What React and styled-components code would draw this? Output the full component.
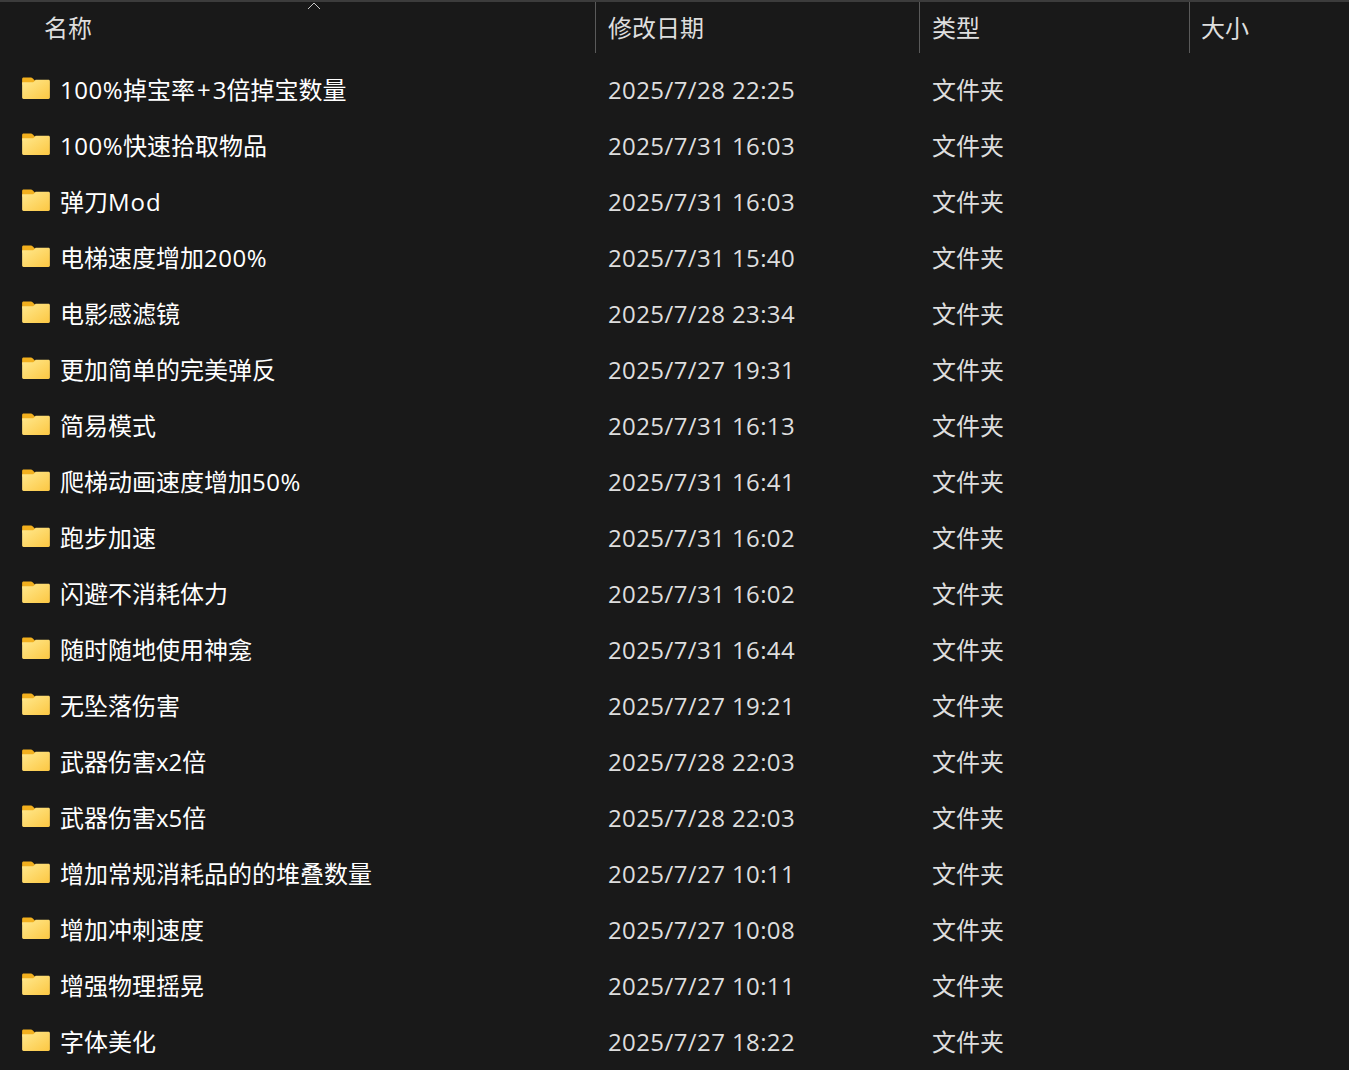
import styled, { createGlobalStyle } from 'styled-components'

const rows = [
    ['100%掉宝率+3倍掉宝数量', '2025/7/28 22:25'],
    ['100%快速拾取物品', '2025/7/31 16:03'],
    ['弹刀Mod', '2025/7/31 16:03'],
    ['电梯速度增加200%', '2025/7/31 15:40'],
    ['电影感滤镜', '2025/7/28 23:34'],
    ['更加简单的完美弹反', '2025/7/27 19:31'],
    ['简易模式', '2025/7/31 16:13'],
    ['爬梯动画速度增加50%', '2025/7/31 16:41'],
    ['跑步加速', '2025/7/31 16:02'],
    ['闪避不消耗体力', '2025/7/31 16:02'],
    ['随时随地使用神龛', '2025/7/31 16:44'],
    ['无坠落伤害', '2025/7/27 19:21'],
    ['武器伤害x2倍', '2025/7/28 22:03'],
    ['武器伤害x5倍', '2025/7/28 22:03'],
    ['增加常规消耗品的的堆叠数量', '2025/7/27 10:11'],
    ['增加冲刺速度', '2025/7/27 10:08'],
    ['增强物理摇晃', '2025/7/27 10:11'],
    ['字体美化', '2025/7/27 18:22'],
]

const GlobalStyle = createGlobalStyle`
    html, body {
        margin: 0;
        height: 100%;
        overflow: hidden;
        background: #191919;
    }
`

const Page = styled.div`
    height: 1070px;
    overflow: hidden;
    background: #191919;
    border-top: 2px solid #3c3c3c;
    box-sizing: border-box;
    font-family: 'Open Sans', 'Noto Sans CJK SC', sans-serif;
    font-size: 24px;
`
const Header = styled.div`
    position: relative;
    display: grid;
    grid-template-columns: 595px 324px 270px 160px;
    height: 51px;
    margin-bottom: 9px;
`
const HeaderCell = styled.div`
    display: flex;
    align-items: center;
    padding-left: ${(p) => p.$pad}px;
    padding-bottom: 3px;
    border-left: ${(p) => (p.$first ? 'none' : '1px solid #5a5a5a')};
    color: #dedede;
`
const SortArrow = styled.svg`
    position: absolute;
    left: 307px;
    top: 0;
    width: 14px;
    height: 8px;
`
const Row = styled.div`
    display: grid;
    grid-template-columns: 595px 324px 270px 160px;
    height: 56px;
    box-sizing: border-box;
    padding-bottom: 4px;
    align-items: center;
`
const NameCell = styled.div`
    display: flex;
    align-items: center;
    padding-left: 22px;
    color: #ffffff;
    white-space: nowrap;
`
const NameText = styled.span`
    margin-left: 10px;
`
const Latin = styled.span`
    letter-spacing: ${(p) => p.$spacing}px;
`
const Plus = styled.span`
    padding: 0 2px;
`
const Cell = styled.div`
    padding-left: 13px;
    color: #dedede;
    white-space: nowrap;
`
const DateCell = styled(Cell)`
    padding-top: 2px;
    letter-spacing: 0.4px;
`
const FolderSvg = styled.svg`
    width: 28px;
    height: 22px;
    flex: none;
`

const FolderIcon = ({ id }) => (
    <FolderSvg viewBox="0 0 29 23">
        <defs>
            <linearGradient id={id} x1="0" y1="0" x2="1" y2="1">
                <stop offset="0" stopColor="#ffe98f" />
                <stop offset="1" stopColor="#fcc742" />
            </linearGradient>
        </defs>
        <path
            d="M1.5 0.5h7.5c1 0 1.6.4 2.2 1l2.3 2.5v4H0v-6c0-.9.6-1.5 1.5-1.5z"
            fill="#f2b01e"
        />
        <path
            d="M0 5.5h10.5c.8 0 1.4-.3 2-.9l1.6-1.6h13.4c.9 0 1.5.6 1.5 1.5v17c0 .9-.6 1.5-1.5 1.5h-26c-.9 0-1.5-.6-1.5-1.5z"
            fill={`url(#${id})`}
        />
    </FolderSvg>
)

// latin runs are a bit wider in the original font than in Open Sans
const renderName = (name) =>
    name.split(/([A-Za-z0-9%]+|\+)/).map((part, i) => {
        if (part === '+') return <Plus key={i}>+</Plus>
        if (part === 'Mod') return <Latin key={i} $spacing={1}>{part}</Latin>
        if (part.includes('%')) return <Latin key={i} $spacing={0.5}>{part}</Latin>
        return part
    })

export default function App() {
    return (
        <Page>
            <GlobalStyle />
            <Header>
                <HeaderCell $first $pad={44}>名称</HeaderCell>
                <HeaderCell $pad={12}>修改日期</HeaderCell>
                <HeaderCell $pad={12}>类型</HeaderCell>
                <HeaderCell $pad={11}>大小</HeaderCell>
                <SortArrow viewBox="0 0 14 8">
                    <path d="M1 7l6-6 6 6" fill="none" stroke="#c8c8c8" strokeWidth="1" />
                </SortArrow>
            </Header>
            {rows.map(([name, date], i) => (
                <Row key={name}>
                    <NameCell>
                        <FolderIcon id={`folder-${i}`} />
                        <NameText>{renderName(name)}</NameText>
                    </NameCell>
                    <DateCell>{date}</DateCell>
                    <Cell>文件夹</Cell>
                </Row>
            ))}
        </Page>
    )
}
